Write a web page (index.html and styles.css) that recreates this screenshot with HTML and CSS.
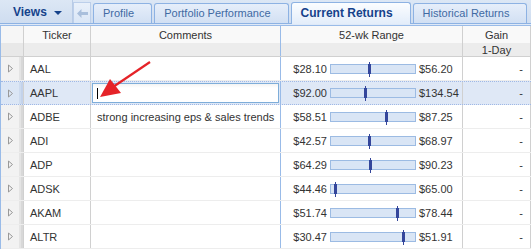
FILE: index.html
```html
<!DOCTYPE html>
<html>
<head>
<meta charset="utf-8">
<link rel="stylesheet" href="styles.css">
</head>
<body>
<div class="panel">
  <div class="tbar">
    <div class="views">Views <span class="caret"></span></div>
    <div class="scroll-left">
      <svg width="11" height="9" viewBox="0 0 11 9"><path d="M0 4.5 L4.5 0 L4.5 3 L11 3 L11 6 L4.5 6 L4.5 9 Z" fill="#a9bfdc"/></svg>
    </div>
    <div class="tabs">
      <div class="tab">Profile</div>
      <div class="tab">Portfolio Performance</div>
      <div class="tab active">Current Returns</div>
      <div class="tab">Historical Returns</div>
    </div>
  </div>
  <div class="strip"></div>
  <div class="grid">
    <div class="row head">
      <div class="c exp"></div>
      <div class="c tick">Ticker</div>
      <div class="c comm">Comments</div>
      <div class="c range">52-wk Range</div>
      <div class="c gain">Gain<br>1-Day</div>
    </div>

    <div class="row">
      <div class="c exp"><span class="tri"></span></div>
      <div class="c tick">AAL</div>
      <div class="c comm"></div>
      <div class="c range"><span class="lo">$28.10</span><span class="bar"><i class="mk" style="left:38px"></i></span><span class="hi">$56.20</span></div>
      <div class="c gain">-</div>
    </div>
    <div class="row sel">
      <div class="c exp"><span class="tri"></span></div>
      <div class="c tick">AAPL</div>
      <div class="c comm"><div class="editor"><span class="cursor"></span></div></div>
      <div class="c range"><span class="lo">$92.00</span><span class="bar"><i class="mk" style="left:34px"></i></span><span class="hi">$134.54</span></div>
      <div class="c gain">-</div>
    </div>
    <div class="row">
      <div class="c exp"><span class="tri"></span></div>
      <div class="c tick">ADBE</div>
      <div class="c comm">strong increasing eps &amp; sales trends</div>
      <div class="c range"><span class="lo">$58.51</span><span class="bar"><i class="mk" style="left:55px"></i></span><span class="hi">$87.25</span></div>
      <div class="c gain">-</div>
    </div>
    <div class="row">
      <div class="c exp"><span class="tri"></span></div>
      <div class="c tick">ADI</div>
      <div class="c comm"></div>
      <div class="c range"><span class="lo">$42.57</span><span class="bar"><i class="mk" style="left:38px"></i></span><span class="hi">$68.97</span></div>
      <div class="c gain">-</div>
    </div>
    <div class="row">
      <div class="c exp"><span class="tri"></span></div>
      <div class="c tick">ADP</div>
      <div class="c comm"></div>
      <div class="c range"><span class="lo">$64.29</span><span class="bar"><i class="mk" style="left:39px"></i></span><span class="hi">$90.23</span></div>
      <div class="c gain">-</div>
    </div>
    <div class="row">
      <div class="c exp"><span class="tri"></span></div>
      <div class="c tick">ADSK</div>
      <div class="c comm"></div>
      <div class="c range"><span class="lo">$44.46</span><span class="bar"><i class="mk" style="left:4px"></i></span><span class="hi">$65.00</span></div>
      <div class="c gain">-</div>
    </div>
    <div class="row">
      <div class="c exp"><span class="tri"></span></div>
      <div class="c tick">AKAM</div>
      <div class="c comm"></div>
      <div class="c range"><span class="lo">$51.74</span><span class="bar"><i class="mk" style="left:66px"></i></span><span class="hi">$78.44</span></div>
      <div class="c gain">-</div>
    </div>
    <div class="row">
      <div class="c exp"><span class="tri"></span></div>
      <div class="c tick">ALTR</div>
      <div class="c comm"></div>
      <div class="c range"><span class="lo">$30.47</span><span class="bar"><i class="mk" style="left:72px"></i></span><span class="hi">$51.91</span></div>
      <div class="c gain">-</div>
    </div>
  </div>
  <svg class="annot" width="531" height="249" viewBox="0 0 531 249">
    <line x1="150" y1="62" x2="113" y2="87" stroke="#e52328" stroke-width="2.2"/>
    <polygon points="100,97 110,79 121,93" fill="#e52328"/>
  </svg>
</div>
</body>
</html>
```

FILE: styles.css
```css
html, body {
  margin: 0;
  padding: 0;
  background: #fff;
}
.panel {
  position: relative;
  width: 531px;
  height: 249px;
  overflow: hidden;
  font-family: "Liberation Sans", Arial, sans-serif;
  font-size: 11px;
  color: #333;
}
.tbar {
  height: 23px;
  display: flex;
  align-items: flex-end;
  background: linear-gradient(#dce7f5, #cfddf0);
}
.views {
  box-sizing: border-box;
  width: 73px;
  height: 23px;
  padding-left: 13px;
  display: flex;
  align-items: center;
  font-weight: bold;
  font-size: 12px;
  color: #15428b;
  border-right: 1px solid #b8cbe6;
}
.caret {
  display: inline-block;
  width: 0;
  height: 0;
  margin-left: 7px;
  margin-top: 2px;
  border-left: 4px solid transparent;
  border-right: 4px solid transparent;
  border-top: 4px solid #15428b;
}
.scroll-left {
  box-sizing: border-box;
  width: 18px;
  height: 21px;
  display: flex;
  align-items: center;
  justify-content: center;
  background: linear-gradient(#e9f0fa, #dae6f6);
  border: 1px solid #bccfea;
  border-bottom: none;
}
.tabs {
  display: flex;
  align-items: flex-end;
  margin-left: 2px;
}
.tab {
  box-sizing: border-box;
  height: 20px;
  padding: 0 17px 0 9px;
  margin-right: 2px;
  line-height: 18px;
  border: 1px solid #8db2e3;
  border-bottom: none;
  border-radius: 3px 3px 0 0;
  background: linear-gradient(#e6eefa, #d2e0f3);
  color: #416aa3;
  white-space: nowrap;
}
.tab.active {
  height: 22px;
  margin-bottom: -1px;
  position: relative;
  font-weight: bold;
  font-size: 12px;
  color: #15428b;
  line-height: 20px;
  background: linear-gradient(#fbfdff, #e3edfa);
}
.strip {
  box-sizing: border-box;
  height: 3px;
  background: #dfe9f7;
  border-top: 1px solid #8db2e3;
  border-bottom: 1px solid #99bbe8;
}
.grid {
  border-left: 1px solid #99bbe8;
}
.row {
  display: grid;
  grid-template-columns: 23px 67px 190px 182px 68px;
  box-sizing: border-box;
  height: 24px;
  border-bottom: 1px solid #ededed;
}
.c {
  box-sizing: border-box;
  border-right: 1px solid #d0d0d0;
  display: flex;
  align-items: center;
  padding-left: 6px;
  white-space: nowrap;
  overflow: hidden;
}
.c.comm {
  border-right-color: #99bbe8;
}
.row.head {
  height: 31px;
  border-bottom: 1px solid #d0d0d0;
  background: linear-gradient(#f9f9f9 0 17px, #ececec 17px);
}
.row.head .c {
  justify-content: center;
  align-items: flex-start;
  padding: 2px 0 0;
  line-height: 15px;
  text-align: center;
}
.row.head .c.exp {
  background: linear-gradient(#f6f6f6 0 17px, #e8e8e8 17px);
}
.c.exp {
  padding-left: 6px;
  background: linear-gradient(to right, #f2f2f2 0 18px, #e4e4e4 18px 20px, #d8d8d8 20px);
}
.tri {
  display: block;
  width: 7px;
  height: 9px;
  background: url("data:image/svg+xml;utf8,<svg xmlns='http://www.w3.org/2000/svg' width='7' height='9'><path d='M1.5 1 L5.5 4.5 L1.5 8 Z' fill='none' stroke='%23999' stroke-width='1'/></svg>") no-repeat;
}
.c.range {
  padding-left: 0;
}
.lo {
  width: 46px;
  text-align: right;
  flex: none;
}
.bar {
  position: relative;
  box-sizing: border-box;
  flex: none;
  width: 86px;
  height: 10px;
  margin: 0 3px;
  background: #d9e5f5;
  border: 1px solid #9cbbe3;
}
.mk {
  position: absolute;
  top: -3px;
  width: 1px;
  height: 15px;
  background: #34469b;
}
.mk::before {
  content: "";
  position: absolute;
  left: -1px;
  top: 2px;
  width: 3px;
  height: 10px;
  background: #34469b;
}
.c.gain {
  justify-content: flex-end;
  padding: 0 7px 0 0;
}
.row.sel {
  background: #dfe8f6;
  border-top: 1px dotted #9fb8e6;
  border-bottom: 1px dotted #9fb8e6;
}
.row.sel .c.exp {
  background: linear-gradient(to right, #dbe6f5 0 18px, #cddbef 18px 20px, #c3d2ea 20px);
}
.row.sel .c.comm {
  padding: 0 0 0 1px;
}
.editor {
  box-sizing: border-box;
  width: 187px;
  height: 20px;
  border: 1px solid #7eadd9;
  background: linear-gradient(#f3f3f3, #fff 4px);
  display: flex;
  align-items: center;
  padding-left: 4px;
}
.cursor {
  display: block;
  width: 1px;
  height: 11px;
  background: #000;
}
.annot {
  position: absolute;
  left: 0;
  top: 0;
  pointer-events: none;
}
```
